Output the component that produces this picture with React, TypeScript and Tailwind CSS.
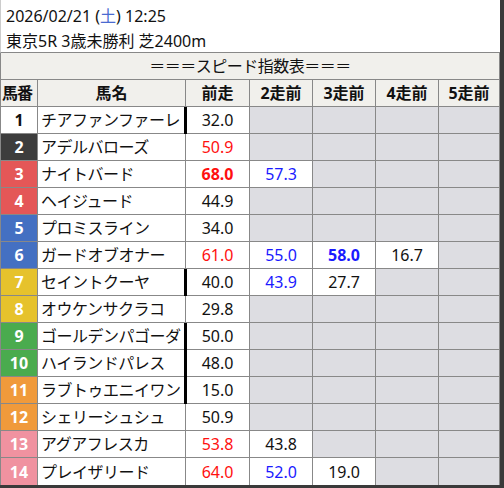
type Val = { t: string; c: "k" | "r" | "R" | "b" | "B" } | null;

type Row = {
  no: number;
  name: string;
  waku: string;
  bar?: boolean;
  vals: Val[];
};

const rows: Row[] = [
  { no: 1, name: "チアファンファーレ", waku: "bg-white text-[#111]", bar: true, vals: [{ t: "32.0", c: "k" }, null, null, null, null] },
  { no: 2, name: "アデルバローズ", waku: "bg-[#3d3d3d] text-white", vals: [{ t: "50.9", c: "r" }, null, null, null, null] },
  { no: 3, name: "ナイトバード", waku: "bg-[#e45757] text-white", vals: [{ t: "68.0", c: "R" }, { t: "57.3", c: "b" }, null, null, null] },
  { no: 4, name: "ヘイジュード", waku: "bg-[#e45757] text-white", vals: [{ t: "44.9", c: "k" }, null, null, null, null] },
  { no: 5, name: "プロミスライン", waku: "bg-[#4470c2] text-white", vals: [{ t: "34.0", c: "k" }, null, null, null, null] },
  { no: 6, name: "ガードオブオナー", waku: "bg-[#4470c2] text-white", vals: [{ t: "61.0", c: "r" }, { t: "55.0", c: "b" }, { t: "58.0", c: "B" }, { t: "16.7", c: "k" }, null] },
  { no: 7, name: "セイントクーヤ", waku: "bg-[#e6c22c] text-white", bar: true, vals: [{ t: "40.0", c: "k" }, { t: "43.9", c: "b" }, { t: "27.7", c: "k" }, null, null] },
  { no: 8, name: "オウケンサクラコ", waku: "bg-[#e6c22c] text-white", vals: [{ t: "29.8", c: "k" }, null, null, null, null] },
  { no: 9, name: "ゴールデンパゴーダ", waku: "bg-[#4aab4e] text-white", bar: true, vals: [{ t: "50.0", c: "k" }, null, null, null, null] },
  { no: 10, name: "ハイランドパレス", waku: "bg-[#4aab4e] text-white", bar: true, vals: [{ t: "48.0", c: "k" }, null, null, null, null] },
  { no: 11, name: "ラブトゥエニイワン", waku: "bg-[#f09a3b] text-white", bar: true, vals: [{ t: "15.0", c: "k" }, null, null, null, null] },
  { no: 12, name: "シェリーシュシュ", waku: "bg-[#f09a3b] text-white", vals: [{ t: "50.9", c: "k" }, null, null, null, null] },
  { no: 13, name: "アグアフレスカ", waku: "bg-[#f092a0] text-white", vals: [{ t: "53.8", c: "r" }, { t: "43.8", c: "k" }, null, null, null] },
  { no: 14, name: "プレイザリード", waku: "bg-[#f092a0] text-white", vals: [{ t: "64.0", c: "r" }, { t: "52.0", c: "b" }, { t: "19.0", c: "k" }, null, null] },
];

const colors = {
  k: "text-[#111]",
  r: "text-[#ff1010]",
  R: "text-[#ff1010] font-bold",
  b: "text-[#1a1aff]",
  B: "text-[#1a1aff] font-bold",
};

const widths = ["w-[64px]", "w-[63px]", "w-[63px]", "w-[63px]", "w-[61px]"];

export default function App() {
  return (
    <div
      className="w-[504px] h-[488px] bg-white border-r-[4px] border-b-[3px] border-[#3a3a3a] flex flex-col text-[16px] text-[#111]"
      style={{ fontFamily: '"Noto Sans", "Noto Sans CJK JP", sans-serif' }}
    >
      <div className="h-[53px] pt-[4px] pl-[5px] leading-[25px] border-b border-[#888] border-l border-l-[#ccc]">
        <div>
          2026/02/21 (<span className="text-[#4a6ad0]">土</span>) 12:25
        </div>
        <div>東京5R 3歳未勝利 芝2400m</div>
      </div>
      <div className="h-[27px] flex items-center justify-center bg-[#f1f0ec] border-b border-l border-r border-[#888] tracking-[-0.5px]">
        ＝＝＝スピード指数表＝＝＝
      </div>
      <div className="h-[27px] flex bg-[#f1f0ec] border-b border-l border-[#888] font-bold">
        <div className="w-[37px] border-r border-[#888] flex items-center pl-[1px] tracking-[-1px]">馬番</div>
        <div className="w-[148px] border-r border-[#888] flex items-center justify-center">馬名</div>
        {["前走", "2走前", "3走前", "4走前", "5走前"].map((h, i) => (
          <div key={h} className={`${widths[i]} border-r border-[#888] flex items-center justify-center`}>
            {h}
          </div>
        ))}
      </div>
      {rows.map((r) => (
        <div key={r.no} className="h-[27px] flex border-b border-l border-[#888] last:border-b-0">
          <div className={`w-[37px] border-r border-[#888] flex items-center justify-center font-bold ${r.waku}`}>
            {r.no}
          </div>
          <div className="w-[148px] border-r border-[#888] flex items-center pl-[3px] whitespace-nowrap overflow-hidden tracking-[-0.5px]">
            {r.name}
          </div>
          {r.vals.map((v, i) => (
            <div
              key={i}
              className={`relative ${widths[i]} border-r border-[#888] flex items-center justify-center ${
                v ? "bg-white" : "bg-[#dddde2]"
              }`}
            >
              {i === 0 && r.bar && <span className="absolute left-[-2px] top-0 bottom-[-1px] w-[3px] bg-black" />}
              {v && <span className={colors[v.c]}>{v.t}</span>}
            </div>
          ))}
        </div>
      ))}
    </div>
  );
}
